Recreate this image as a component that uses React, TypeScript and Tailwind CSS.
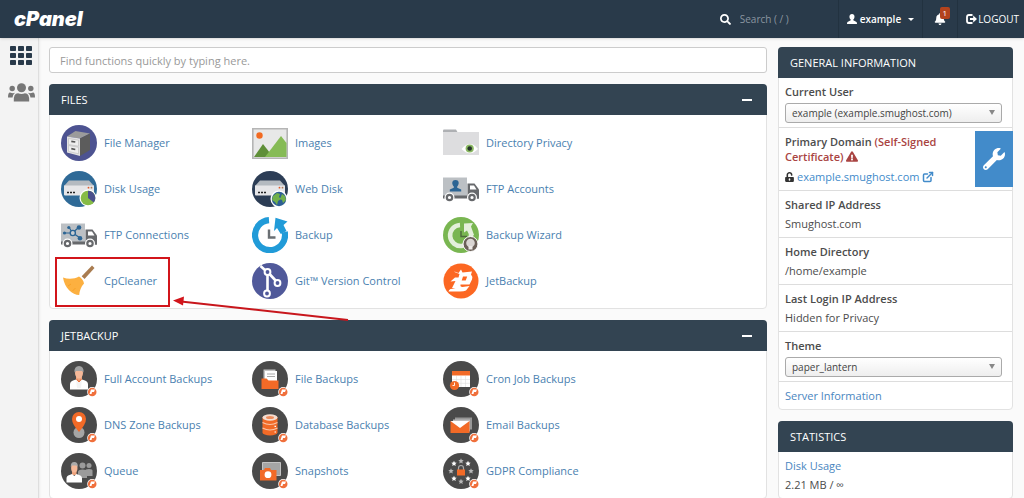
import React from 'react';
import { FaBell, FaExclamationTriangle, FaSearch, FaUnlockAlt, FaWrench } from 'react-icons/fa';
import { FiExternalLink } from 'react-icons/fi';

type Feature = {
  name: string;
  icon: React.FC;
  highlighted?: boolean;
};

const Svg: React.FC<{ children: React.ReactNode }> = ({ children }) => (
  <svg viewBox="0 0 36 36" className="h-9 w-9 shrink-0" aria-hidden="true">
    {children}
  </svg>
);

/* ---------- Files icons ---------- */

const FileManagerIcon: React.FC = () => (
  <Svg>
    <circle cx="18" cy="18" r="18" fill="#4d5391" />
    <path d="M6 11.500 14.500 6 29 8.500 19 13.500z" fill="#9b9b9b" />
    <path d="m6 11.500 13 2v17.500L6 27.500z" fill="#e2e2e2" />
    <path d="m19 13.500 10-5v16.500l-10 6z" fill="#5c5c5c" />
    <path d="m7.500 13.500 10 1.700v6L7.500 19.500zM7.500 20.500l10 1.800v6.500l-10-2.400z" fill="#eee" stroke="#bbb" strokeWidth=".6" />
    <path d="m10.300 16.300 4 .7M10.300 23.700l4 .8" stroke="#555" strokeWidth="1.700" />
  </Svg>
);

const Server: React.FC = () => (
  <>
    <path d="M8 9.500h20l5 5.500H3z" fill="#b4bac0" />
    <path d="M3 14.500h30v9q0 1-1 1H4q-1 0-1-1z" fill="#e6e6e8" />
    <path d="M6 21.500h2M9 21.500h2M12 21.500h2" stroke="#222" strokeWidth="1.700" />
    <circle cx="27.500" cy="16.700" r=".9" fill="#e05a2b" />
    <circle cx="30.500" cy="16.700" r=".9" fill="#b07b56" />
  </>
);

const DiskUsageIcon: React.FC = () => (
  <Svg>
    <circle cx="18" cy="18" r="18" fill="#2f6a97" />
    <Server />
    <circle cx="27" cy="27" r="8.500" fill="#fff" />
    <circle cx="27" cy="27" r="7.300" fill="#86bb46" />
    <path d="M27 27v-7.300a7.300 7.300 0 0 1 5.800 11.700z" fill="#4a4f8c" />
  </Svg>
);

const WebDiskIcon: React.FC = () => (
  <Svg>
    <circle cx="18" cy="18" r="18" fill="#2c3d55" />
    <Server />
    <circle cx="27" cy="28" r="8.500" fill="#fff" />
    <circle cx="27" cy="28" r="7.200" fill="#2d5f93" />
    <path d="m21 25 4-3 3 1-1 3 2 2-3 2-1 4-2-3-3-2zM30 23l3 2 1 4-3 3-1-3-2-1z" fill="#72b04a" />
  </Svg>
);

const ImagesIcon: React.FC = () => (
  <Svg>
    <path d="M.800 3.800h34.400v29.400H.8z" fill="#e8e8e8" stroke="#b5b5b5" strokeWidth="1.600" />
    <circle cx="7.500" cy="10.500" r="3.200" fill="#f26a21" />
    <path d="m2 32 9-13 7 9v4z" fill="#5f8f38" />
    <path d="m13 32 16-21 5.500 7v14z" fill="#86bb56" />
  </Svg>
);

const DirectoryPrivacyIcon: React.FC = () => (
  <Svg>
    <path d="M0 5.500q0-1 1-1h12l2 3.500H0z" fill="#aeb0b3" />
    <path d="M0 7h36v23H0z" fill="#dddddf" />
    <path d="M18.500 24q8.500-10 16.500 0-8 8.500-16.500 0z" fill="#fff" />
    <circle cx="26.700" cy="23.500" r="4.100" fill="#8bb963" />
    <circle cx="26.700" cy="23.500" r="2.300" fill="#26332a" />
  </Svg>
);

const Truck: React.FC = () => (
  <>
    <path d="M0 6.500h24v19H0z" fill="#bcc0c4" />
    <path d="M24.500 12.500h7l4.500 6v9H24.500z" fill="#67696c" />
    <path d="M27 14.500h4l2.500 4H27z" fill="#fff" />
    <path d="M0 24.500h36v3H0z" fill="#67696c" />
    <circle cx="6.500" cy="26.500" r="5" fill="#fff" />
    <circle cx="29" cy="26.500" r="5" fill="#fff" />
    <circle cx="6.500" cy="26.500" r="2.700" fill="#fff" stroke="#67696c" strokeWidth="2.200" />
    <circle cx="29" cy="26.500" r="2.700" fill="#fff" stroke="#67696c" strokeWidth="2.200" />
  </>
);

const FtpAccountsIcon: React.FC = () => (
  <Svg>
    <Truck />
    <path d="M12.500 9c4.500 0 3.500 5 1.700 6.500v1.200l4 1.700v2.100H6.800v-2.100l4-1.700v-1.200C9 14 8 9 12.500 9z" fill="#2c6594" />
  </Svg>
);

const FtpConnectionsIcon: React.FC = () => (
  <Svg>
    <Truck />
    <path d="M4 16h7M11.500 16l6-5.500M12 16l7 5M11.500 16l-3-5" stroke="#2c6594" strokeWidth="1.200" />
    <circle cx="3.500" cy="16" r="1.600" fill="#2c6594" />
    <circle cx="7.800" cy="10.500" r="1.600" fill="#2c6594" />
    <circle cx="18" cy="10.500" r="2.300" fill="#2c6594" />
    <circle cx="19" cy="21.300" r="2.300" fill="#2c6594" />
    <circle cx="11.800" cy="16" r="2.600" fill="#c8cdd1" stroke="#2c6594" strokeWidth="1.400" />
  </Svg>
);

const BackupIcon: React.FC = () => (
  <Svg>
    <path d="M17 3.200A15 15 0 1 0 32.700 15" fill="none" stroke="#219bd8" strokeWidth="6.200" />
    <path d="M23.500.800 35.500 4.500 31.500 8l3 6-5.700 3-3.800-6-3 3z" fill="#219bd8" />
    <path d="M17 12.500v8h6.500" fill="none" stroke="#6a6f73" strokeWidth="2.400" />
  </Svg>
);

const BackupWizardIcon: React.FC = () => (
  <Svg>
    <circle cx="18" cy="18" r="18" fill="#79b651" />
    <path d="M17 8A10.500 10.500 0 1 0 28 17" fill="none" stroke="#e3efda" strokeWidth="4.600" />
    <path d="m21 6.500 9-.500-2 3.500 3 8.500-4.500.500-2.500-5-3 2z" fill="#e3efda" />
    <path d="M18 14v5.500h6" fill="none" stroke="#4d6a3b" strokeWidth="1.400" />
    <circle cx="27.500" cy="27" r="7.500" fill="#6b6058" stroke="#fff" strokeWidth="1" />
    <circle cx="27.500" cy="26" r="4.300" fill="#d9d5d2" />
    <path d="M25.500 29h4v3.500h-4z" fill="#ece9e6" />
  </Svg>
);

const BroomIcon: React.FC = () => (
  <Svg>
    <path d="m23.500 16-2.800-2.800L31 2.500 33.500 5z" fill="#a97c50" />
    <path d="M18 13.500c2.500 1.500 4.500 4 5 7-3 3-4.500 7.500-4.800 11.500C11.500 32 3.500 25 2 14.500c5.500 2 11.500 1.500 16-1z" fill="#fcb040" />
    <path d="m7 23 3-2M11.500 28l3-3" stroke="#f7a127" strokeWidth="1" />
  </Svg>
);

const GitIcon: React.FC = () => (
  <Svg>
    <circle cx="18" cy="18" r="18" fill="#50599a" />
    <g fill="none" stroke="#fff" strokeWidth="2.600">
      <path d="m8.500 3 5 4.500M15.500 12v16M17.500 11l6.500 7" />
      <circle cx="15.500" cy="9" r="2.900" fill="#50599a" strokeWidth="2" />
      <circle cx="25.500" cy="20" r="2.900" fill="#50599a" strokeWidth="2" />
      <circle cx="15" cy="30.500" r="2.900" fill="#50599a" strokeWidth="2" />
    </g>
  </Svg>
);

const JetShape: React.FC = () => (
  <path
    fillRule="evenodd"
    d="m11.500 8.500 4 1.500L18 6.500l1.500 3 9.500-1-1 3q2 2 1 5l-2.500 5H17.500q-.500 2.500 2 2.500l7-1-3.500 4.500q-2 1-6 1H5.500q.500-2 2-2.500l5-.500-3.500-.500 3.500-7-5 .500 4.500-4h3.500l1-3.500-5-2zM20 13.500l-1.300 4h4l1.500-4z"
  />
);

const JetBackupIcon: React.FC = () => (
  <Svg>
    <circle cx="18" cy="18" r="17.500" fill="#fc6722" />
    <g fill="#fff">
      <JetShape />
    </g>
  </Svg>
);

/* ---------- JetBackup icons ---------- */

const Badge: React.FC<{ children: React.ReactNode }> = ({ children }) => (
  <Svg>
    <circle cx="18" cy="18" r="18" fill="#4a4a4a" />
    {children}
    <circle cx="31.200" cy="31" r="5" fill="#fff" />
    <circle cx="31.200" cy="31" r="4.300" fill="#f0703c" />
    <path d="m28.500 33 1.500-4.500h4l-1 2.500h-2l-.5 2z" fill="#fff" />
  </Svg>
);

const AccountIcon: React.FC = () => (
  <Badge>
    <path d="M15 15h6v7h-6z" fill="#eda27b" />
    <path d="M9 28.500v-5q0-3 3-4l3-1 3 3 3-3 3 1q3 1 3 4v5z" fill="#fff" />
    <path d="m15 18 3 4 3-4-1 9h-4z" fill="#f3f3f3" />
    <path d="m15.500 18 2.500 3 2.500-3" fill="none" stroke="#e86b35" strokeWidth="1" />
    <ellipse cx="18" cy="12" rx="4" ry="5.500" fill="#f5b898" />
    <path d="M13.500 11.500q-.500-6.500 4.500-6.500t4.500 6.500l-1.500-1.500h-6z" fill="#a3a3a3" />
  </Badge>
);

const FolderIcon: React.FC = () => (
  <Badge>
    <path d="M11.500 8.500h12v13h-12z" fill="#c4c4c4" />
    <path d="M13 10h12v12H13z" fill="#fff" />
    <path d="M15 13h8M15 15.500h8" stroke="#aaa" strokeWidth="1" />
    <path d="M9.500 17.500h5l2 2h10v8.500h-17z" fill="#f26a27" />
  </Badge>
);

const CronIcon: React.FC = () => (
  <Badge>
    <path d="M9 10h18v16H9z" fill="#fff" />
    <path d="M9 10h18v4.500H9z" fill="#f26a27" />
    <path d="M13.500 15v11M18 15v11M22.500 15v11M9 18.500h18M9 22.300h18" stroke="#ddd" strokeWidth=".6" />
    <circle cx="11.500" cy="24.500" r="4.600" fill="#f26a27" />
    <path d="M11.500 21.500v3H9.500" fill="none" stroke="#fff" strokeWidth=".9" />
  </Badge>
);

const DnsIcon: React.FC = () => (
  <Badge>
    <circle cx="18" cy="25.500" r="5.500" fill="#a5a5a5" />
    <path d="M18 25q-7-8-7-13a7 7 0 0 1 14 0q0 5-7 13z" fill="#f26a27" />
    <circle cx="18" cy="12" r="3" fill="#fff" />
  </Badge>
);

const DatabaseIcon: React.FC = () => (
  <Badge>
    <path d="M10.500 10v15.500a7.500 3 0 0 0 15 0V10z" fill="#f26a27" />
    <ellipse cx="18" cy="10.500" rx="7.500" ry="3.200" fill="#f5ddd0" />
    <ellipse cx="18" cy="10.500" rx="4" ry="1.500" fill="#ee8c5c" />
    <path d="M10.500 15.500q7.500 4 15 0M10.500 21q7.500 4 15 0" fill="none" stroke="#fbc6a9" strokeWidth="1.100" />
    <path d="M22.500 19.300h1.500M22.500 25h1.500" stroke="#fff" strokeWidth="1.200" />
  </Badge>
);

const EmailIcon: React.FC = () => (
  <Badge>
    <path d="M12 10.500h17v12H12z" fill="#969696" />
    <path d="M10 12.500h17v12H10z" fill="#bdbdbd" />
    <path d="M7.500 14h19v12h-19z" fill="#f26a27" />
    <path d="M7.500 14h19L17 21z" fill="#fff" />
  </Badge>
);

const QueueIcon: React.FC = () => (
  <Badge>
    <g fill="#9b9b9b">
      <circle cx="21.500" cy="12.500" r="3" />
      <circle cx="28" cy="12.500" r="2.500" />
      <path d="M17 25v-6q0-2.500 4.500-2.500T26 19v6zM24 23v-5q0-2 4-2t3.500 2v5z" />
    </g>
    <path d="M11 16h4.500v6H11z" fill="#eda27b" />
    <path d="M5.500 29.500v-4q0-3 3-3.500l2.500-1 2.300 2 2.200-2 2.500 1q3 .500 3 3.500v4z" fill="#fff" />
    <ellipse cx="13.300" cy="15" rx="3.200" ry="4.500" fill="#f5b898" />
    <path d="M9.800 14q-.300-5 3.500-5t3.500 5l-1.300-1.500h-4.500z" fill="#aaa" />
  </Badge>
);

const SnapshotsIcon: React.FC = () => (
  <Badge>
    <path d="M10.500 9.500h18v13h-18z" fill="#a5a5a5" stroke="#c4c4c4" strokeWidth="1" />
    <path d="M8 17h4l1-2h5l1 2h5.500v10.500H8z" fill="#f26a27" />
    <circle cx="16" cy="21.700" r="3.400" fill="#fff" />
  </Badge>
);

const STAR = 'm0-2.700.8 1.700 1.900.2-1.400 1.300.4 1.900L0 1.500l-1.700.9.4-1.900-1.400-1.300 1.900-.2z';
const STARS = [[18, 8], [25, 10.500], [28, 18], [25, 25.500], [18, 28.500], [11, 25.500], [8, 18], [11, 10.500]];

const GdprIcon: React.FC = () => (
  <Badge>
    {STARS.map(([x, y], i) => (
      <path key={i} d={STAR} transform={`translate(${x} ${y})`} fill={i % 2 ? '#fff' : '#b9b9b9'} />
    ))}
    <path d="M15.500 17v-2q0-2.500 2.500-2.500t2.500 2.500v2" fill="none" stroke="#aaa" strokeWidth="1.200" />
    <path d="M14 16.500h8v6h-8z" fill="#f26a27" />
  </Badge>
);

const files: Feature[] = [
  { name: 'File Manager', icon: FileManagerIcon },
  { name: 'Images', icon: ImagesIcon },
  { name: 'Directory Privacy', icon: DirectoryPrivacyIcon },
  { name: 'Disk Usage', icon: DiskUsageIcon },
  { name: 'Web Disk', icon: WebDiskIcon },
  { name: 'FTP Accounts', icon: FtpAccountsIcon },
  { name: 'FTP Connections', icon: FtpConnectionsIcon },
  { name: 'Backup', icon: BackupIcon },
  { name: 'Backup Wizard', icon: BackupWizardIcon },
  { name: 'CpCleaner', icon: BroomIcon, highlighted: true },
  { name: 'Git™ Version Control', icon: GitIcon },
  { name: 'JetBackup', icon: JetBackupIcon },
];

const jetbackup: Feature[] = [
  { name: 'Full Account Backups', icon: AccountIcon },
  { name: 'File Backups', icon: FolderIcon },
  { name: 'Cron Job Backups', icon: CronIcon },
  { name: 'DNS Zone Backups', icon: DnsIcon },
  { name: 'Database Backups', icon: DatabaseIcon },
  { name: 'Email Backups', icon: EmailIcon },
  { name: 'Queue', icon: QueueIcon },
  { name: 'Snapshots', icon: SnapshotsIcon },
  { name: 'GDPR Compliance', icon: GdprIcon },
];

/* ---------- Layout pieces ---------- */

// Red frame and arrow drawn over the highlighted feature
const Callout: React.FC = () => (
  <>
    <span className="pointer-events-none absolute -top-1.5 -left-1.5 z-10 h-[50px] w-[115px] border-2 border-[#d2151b]" />
    <svg viewBox="0 0 180 30" className="pointer-events-none absolute top-[31px] left-28 z-10 h-[30px] w-[180px]" aria-hidden="true">
      <path d="M8 7.500 175 26" stroke="#c8161c" strokeWidth="2" />
      <path d="m0 6.500 11-4-1 9z" fill="#d2151b" />
    </svg>
  </>
);

const FeatureLink: React.FC<{ feature: Feature }> = ({ feature }) => {
  const Icon = feature.icon;
  return (
    <div className="relative">
      <a href="#" className="flex items-center gap-[7px] text-[#4a7fb0]">
        <Icon />
        <span>{feature.name}</span>
      </a>
      {feature.highlighted && <Callout />}
    </div>
  );
};

const FeaturePanel: React.FC<{ title: string; features: Feature[] }> = ({ title, features }) => (
  <section className="rounded-sm border border-[#e2e2e2] bg-white">
    <header className="-mx-px -mt-px flex h-[31px] items-center justify-between rounded-t-sm bg-[#334452] px-3 text-white">
      <h2>{title}</h2>
      <button type="button" aria-label={`Collapse ${title}`} className="flex h-5 w-4 items-center justify-center">
        <span className="h-0.5 w-2.5 bg-white" />
      </button>
    </header>
    <div className="grid grid-cols-[repeat(auto-fill,191px)] gap-y-2.5 pt-2.5 pb-[9px] pl-[11px]">
      {features.map(f => (
        <FeatureLink key={f.name} feature={f} />
      ))}
    </div>
  </section>
);

const SidePanel: React.FC<{ title: string; children: React.ReactNode }> = ({ title, children }) => (
  <section className="rounded-sm border border-[#e2e2e2] bg-white">
    <header className="-mx-px -mt-px flex h-[31px] items-center rounded-t-sm bg-[#334452] px-3 text-white">
      <h2>{title}</h2>
    </header>
    <div className="divide-y divide-[#dddddd] leading-[19px] text-[#4c4c4c]">{children}</div>
  </section>
);

const SelectRow: React.FC<{ id: string; label: string; value: string }> = ({ id, label, value }) => (
  <div className="px-1.5 py-1">
    <label htmlFor={id} className="block font-semibold text-[#4c4c4c]">
      {label}
    </label>
    <div className="relative mt-0.5 mr-1">
      <select
        id={id}
        defaultValue={value}
        className="block h-5 w-full appearance-none rounded-[3px] border border-[#aaaaaa] bg-gradient-to-b from-white to-[#eeeeee] px-1.5 text-[10px] leading-[18px] text-[#444444]"
      >
        <option>{value}</option>
      </select>
      <svg viewBox="0 0 6 5" className="pointer-events-none absolute top-[7px] right-[7px] h-[5px] w-1.5" aria-hidden="true">
        <path d="M0 0h6L3 5z" fill="#888" />
      </svg>
    </div>
  </div>
);

const InfoRow: React.FC<{ label: string; value: string }> = ({ label, value }) => (
  <div className="px-1.5 py-1">
    <div className="font-semibold">{label}</div>
    <div>{value}</div>
  </div>
);

const TopBar: React.FC = () => (
  <header className="relative z-20 flex h-[38px] items-stretch bg-[#293a4a] text-[10px] text-white shadow">
    <a href="#" className="flex items-center pl-3.5 font-[Inter] text-[20px] font-black italic">
      cPanel
    </a>
    <div className="ml-auto flex items-center gap-[9px] pr-4">
      <label htmlFor="top-search">
        <FaSearch className="h-[11px] w-[11px]" aria-label="Search" />
      </label>
      <input
        id="top-search"
        type="text"
        placeholder="Search ( / )"
        className="w-[82px] bg-transparent outline-none placeholder:text-[#8b96a0]"
      />
    </div>
    <button type="button" className="flex items-center gap-[3px] border-l border-[#223240] px-2 font-semibold">
      <svg viewBox="0 0 10 10" className="h-2.5 w-2.5" aria-hidden="true">
        <path d="M5 0c3.300 0 3 4.300 1.300 5.500v.8L9.500 8q.5.400.5 2H0q0-1.600.5-2l3.200-1.700v-.8C2 4.300 1.700 0 5 0z" fill="#fff" />
      </svg>
      example
      <svg viewBox="0 0 6 3" className="ml-1 h-[3px] w-1.5" aria-hidden="true">
        <path d="M0 0h6L3 3z" fill="#fff" />
      </svg>
    </button>
    <button type="button" aria-label="Notifications" className="relative border-l border-[#223240] px-[11px]">
      <FaBell className="h-3 w-3" />
      <span className="absolute top-[7px] right-[7px] rounded-xs bg-[#b3431d] px-[3px] text-[8px] leading-[12px]">1</span>
    </button>
    <a href="#" className="flex items-center gap-px border-l border-[#223240] pr-[5px] pl-2">
      <svg viewBox="0 0 11 10" className="h-2.5 w-[11px]" aria-hidden="true">
        <path d="M6.500 1H3Q1 1 1 3v4q0 2 2 2h3.500" fill="none" stroke="#fff" strokeWidth="1.800" />
        <path d="M4 3.900h3.200V1.500L11 5 7.200 8.500V6.100H4z" fill="#fff" />
      </svg>
      LOGOUT
    </a>
  </header>
);

const SideNav: React.FC = () => (
  <nav className="flex w-[39px] shrink-0 flex-col items-center gap-[18px] border-r border-[#dedede] bg-[#f3f3f3] pt-2 pl-1 shadow">
    <a href="#" aria-label="Home">
      <svg viewBox="0 0 22 19" className="block h-[19px] w-[22px]" fill="#293a4a" aria-hidden="true">
        {[0, 7, 14].map(y =>
          [0, 8, 16].map(x => <rect key={`${x}-${y}`} x={x} y={y} width="6" height="5" rx=".8" />)
        )}
      </svg>
    </a>
    <a href="#" aria-label="User Manager">
      <svg viewBox="0 0 27 19" className="block h-[19px] w-[27px]" fill="#777777" aria-hidden="true">
        <circle cx="13.500" cy="4.700" r="4.500" />
        <circle cx="4.200" cy="5.500" r="2.700" />
        <circle cx="22.800" cy="5.500" r="2.700" />
        <path d="M5.800 18.500q-.500-8.300 4.200-8.300 3.500 1.600 7 0 4.700 0 4.200 8.300zM0 14.500q0-5 2-5 3 1.200 5 .300-2 1.700-2.500 4.700zM27 14.500q0-5-2-5-3 1.200-5 .300 2 1.700 2.500 4.700z" />
      </svg>
    </a>
  </nav>
);

export default function App() {
  return (
    <div className="flex h-screen flex-col overflow-hidden bg-[#fafafa] font-['Open_Sans',sans-serif] text-[11px] leading-4">
      <TopBar />
      <div className="flex min-h-0 flex-1">
        <SideNav />
        <div className="flex flex-1 items-start gap-[11px] pt-[9px] pr-[11px] pl-2.5">
          <main className="flex flex-1 flex-col gap-[11px]">
            <input
              type="text"
              aria-label="Find functions"
              placeholder="Find functions quickly by typing here."
              className="h-[26px] w-full rounded-[3px] border border-[#cccccc] bg-white px-2.5 outline-none placeholder:text-[#999999]"
            />
            <FeaturePanel title="FILES" features={files} />
            <FeaturePanel title="JETBACKUP" features={jetbackup} />
          </main>

          <aside className="flex w-[235px] shrink-0 flex-col gap-[11px]">
            <SidePanel title="GENERAL INFORMATION">
              <SelectRow id="current-user" label="Current User" value="example (example.smughost.com)" />
              <div className="flex">
                <div className="flex-1 pt-1.5 pb-1 pl-1.5">
                  <div className="leading-[15px] font-semibold">
                    Primary Domain <span className="text-[#a94442]">(Self-Signed</span>{' '}
                    <span className="whitespace-nowrap text-[#a94442]">
                      Certificate) <FaExclamationTriangle className="inline h-[11px] w-3 align-[-1px]" />
                    </span>
                  </div>
                  <div className="mt-[3px] flex items-center gap-[3px]">
                    <FaUnlockAlt className="h-2.5 w-[9px] text-[#333333]" />
                    <a href="#" className="flex items-center gap-[3px] text-[#428bca]">
                      example.smughost.com
                      <FiExternalLink className="h-3 w-3" strokeWidth={3} />
                    </a>
                  </div>
                </div>
                <button
                  type="button"
                  aria-label="Manage certificate"
                  className="-mr-px my-[3px] flex w-[38px] shrink-0 items-center justify-center bg-[#428bca] text-white"
                >
                  <FaWrench className="h-[22px] w-[22px]" />
                </button>
              </div>
              <InfoRow label="Shared IP Address" value="Smughost.com" />
              <InfoRow label="Home Directory" value="/home/example" />
              <InfoRow label="Last Login IP Address" value="Hidden for Privacy" />
              <SelectRow id="theme" label="Theme" value="paper_lantern" />
              <div className="px-1.5 py-1">
                <a href="#" className="text-[#4a86c0]">
                  Server Information
                </a>
              </div>
            </SidePanel>
            <SidePanel title="STATISTICS">
              <div className="px-1.5 py-1">
                <a href="#" className="text-[#4a86c0]">
                  Disk Usage
                </a>
                <div>2.21 MB / ∞</div>
              </div>
            </SidePanel>
          </aside>
        </div>
      </div>
    </div>
  );
}
